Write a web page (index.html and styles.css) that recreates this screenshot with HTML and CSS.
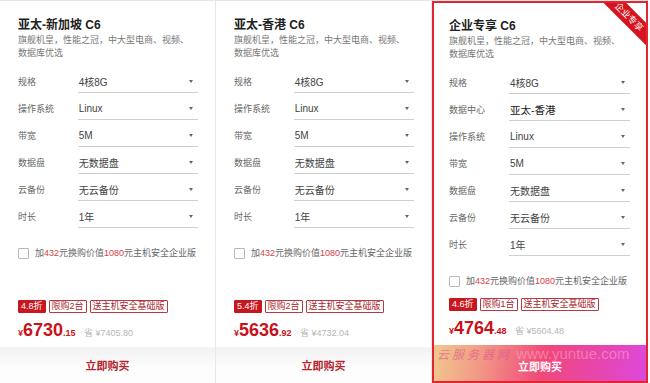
FILE: index.html
```html
<!DOCTYPE html>
<html lang="zh-CN">
<head>
<meta charset="UTF-8" />
<meta name="viewport" content="width=device-width, initial-scale=1" />
<title>云服务器套餐</title>
<link rel="stylesheet" href="styles.css">
</head>
<body>

  <div class="plans">

    <div class="card">
      <div class="card-body">
        <h3 class="title">亚太-新加坡 C6</h3>
        <p class="desc">旗舰机皇，性能之冠，中大型电商、视频、数据库优选</p>

        <div class="row"><span class="label">规格</span><div class="select">4核8G<i class="caret"></i></div></div>
        <div class="row"><span class="label">操作系统</span><div class="select">Linux<i class="caret"></i></div></div>
        <div class="row"><span class="label">带宽</span><div class="select">5M<i class="caret"></i></div></div>
        <div class="row"><span class="label">数据盘</span><div class="select">无数据盘<i class="caret"></i></div></div>
        <div class="row"><span class="label">云备份</span><div class="select">无云备份<i class="caret"></i></div></div>
        <div class="row"><span class="label">时长</span><div class="select">1年<i class="caret"></i></div></div>

        <label class="addon"><span class="box"></span>加<em>432</em>元换购价值<em>1080</em>元主机安全企业版</label>

        <div class="tags">
          <span class="tag off">4.8折</span>
          <span class="tag">限购2台</span>
          <span class="tag">送主机安全基础版</span>
        </div>
        <div class="price">
          <span class="cur">¥</span><span class="int">6730</span><span class="dec">.15</span>
          <span class="old">省 ¥7405.80</span>
        </div>
      </div>
      <a class="buy" href="#">立即购买</a>
    </div>

    <div class="card">
      <div class="card-body">
        <h3 class="title">亚太-香港 C6</h3>
        <p class="desc">旗舰机皇，性能之冠，中大型电商、视频、数据库优选</p>

        <div class="row"><span class="label">规格</span><div class="select">4核8G<i class="caret"></i></div></div>
        <div class="row"><span class="label">操作系统</span><div class="select">Linux<i class="caret"></i></div></div>
        <div class="row"><span class="label">带宽</span><div class="select">5M<i class="caret"></i></div></div>
        <div class="row"><span class="label">数据盘</span><div class="select">无数据盘<i class="caret"></i></div></div>
        <div class="row"><span class="label">云备份</span><div class="select">无云备份<i class="caret"></i></div></div>
        <div class="row"><span class="label">时长</span><div class="select">1年<i class="caret"></i></div></div>

        <label class="addon"><span class="box"></span>加<em>432</em>元换购价值<em>1080</em>元主机安全企业版</label>

        <div class="tags">
          <span class="tag off">5.4折</span>
          <span class="tag">限购2台</span>
          <span class="tag">送主机安全基础版</span>
        </div>
        <div class="price">
          <span class="cur">¥</span><span class="int">5636</span><span class="dec">.92</span>
          <span class="old">省 ¥4732.04</span>
        </div>
      </div>
      <a class="buy" href="#">立即购买</a>
    </div>

    <div class="card featured">
      <span class="ribbon">企业专享</span>
      <div class="card-body">
        <h3 class="title">企业专享 C6</h3>
        <p class="desc">旗舰机皇，性能之冠，中大型电商、视频、数据库优选</p>

        <div class="row"><span class="label">规格</span><div class="select">4核8G<i class="caret"></i></div></div>
        <div class="row"><span class="label">数据中心</span><div class="select strong">亚太-香港<i class="caret"></i></div></div>
        <div class="row"><span class="label">操作系统</span><div class="select">Linux<i class="caret"></i></div></div>
        <div class="row"><span class="label">带宽</span><div class="select">5M<i class="caret"></i></div></div>
        <div class="row"><span class="label">数据盘</span><div class="select">无数据盘<i class="caret"></i></div></div>
        <div class="row"><span class="label">云备份</span><div class="select">无云备份<i class="caret"></i></div></div>
        <div class="row"><span class="label">时长</span><div class="select">1年<i class="caret"></i></div></div>

        <label class="addon"><span class="box"></span>加<em>432</em>元换购价值<em>1080</em>元主机安全企业版</label>

        <div class="tags">
          <span class="tag off">4.6折</span>
          <span class="tag">限购1台</span>
          <span class="tag">送主机安全基础版</span>
        </div>
        <div class="price">
          <span class="cur">¥</span><span class="int">4764</span><span class="dec">.48</span>
          <span class="old">省 ¥5604.48</span>
        </div>
      </div>
      <a class="buy hot" href="#">
        <span class="mark"><b>云服务器网</b> www.yuntue.com</span>
        立即购买
      </a>
    </div>

  </div>

</body>
</html>
```

FILE: styles.css
```css
body {
  margin: 0;
  background: #fff;
  font-family: "Liberation Sans", Arial, "Noto Sans CJK SC", sans-serif;
  color: #333;
}
.plans {
  display: flex;
  width: 648px;
  height: 382px;
  border-top: 1px solid #e6e6e6;
}
.card {
  position: relative;
  width: 216px;
  box-sizing: border-box;
  border-right: 1px solid #e8e8e8;
  display: flex;
  flex-direction: column;
  overflow: hidden;
}
.card.featured {
  border: 2px solid #e3252f;
}
.card-body {
  flex: 1;
  display: flex;
  flex-direction: column;
  padding: 16px 17px 0 18px;
}
.featured .card-body {
  padding: 15px 16px 0 15px;
}
.title {
  margin: 0;
  font-size: 12px;
  line-height: 16px;
  font-weight: bold;
  color: #222;
}
.desc {
  margin: 1px 0 6px;
  width: 176px;
  font-size: 9px;
  line-height: 13px;
  color: #777;
}
.row {
  display: flex;
  align-items: flex-end;
  height: 27px;
}
.label {
  width: 60px;
  font-size: 9px;
  line-height: 22px;
  color: #666;
}
.select {
  width: 121px;
  height: 22px;
  box-sizing: border-box;
  padding: 0 5px 0 1px;
  border-bottom: 1px solid #cfcfcf;
  display: flex;
  align-items: center;
  justify-content: space-between;
  font-size: 10px;
  color: #444;
}
.select.strong {
  font-size: 10.5px;
  color: #222;
}
.caret {
  width: 0;
  height: 0;
  border-left: 2.5px solid transparent;
  border-right: 2.5px solid transparent;
  border-top: 3px solid #666;
}
.addon {
  display: flex;
  align-items: center;
  margin-top: 19px;
  font-size: 9px;
  line-height: 12px;
  color: #666;
}
.addon em {
  font-style: normal;
  color: #d9404a;
}
.box {
  width: 9px;
  height: 9px;
  margin-right: 6px;
  border: 1px solid #b8b8b8;
  border-radius: 1px;
}
.tags {
  margin-top: auto;
  display: flex;
  gap: 3px;
}
.tag {
  font-size: 9px;
  line-height: 11px;
  padding: 0 2px;
  border: 1px solid #b73a40;
  border-radius: 1px;
  color: #a8262d;
}
.tag.off {
  background: #c8161e;
  border-color: #c8161e;
  color: #fff;
}
.price {
  margin: 7px 0 4px;
  line-height: 20px;
  color: #c8121b;
  font-weight: bold;
  white-space: nowrap;
}
.cur {
  font-size: 9px;
}
.int {
  font-size: 18px;
}
.dec {
  font-size: 9px;
}
.old {
  margin-left: 4px;
  font-size: 9px;
  font-weight: normal;
  color: #b5b5b5;
}
.buy {
  position: relative;
  height: 36px;
  display: flex;
  align-items: center;
  justify-content: center;
  background: linear-gradient(#f2f2f2, #fdfdfd 60%);
  font-size: 11px;
  font-weight: bold;
  color: #b3242c;
  text-decoration: none;
}
.buy.hot {
  background: linear-gradient(100deg, #f1c88e 0%, #f29a86 22%, #f0477a 52%, #e646b4 80%, #dc48dc 100%);
  color: #fff;
  padding-top: 6px;
  box-sizing: border-box;
}
.mark {
  position: absolute;
  left: 3px;
  top: 1px;
  font-size: 15px;
  line-height: 16px;
  font-weight: normal;
  color: rgba(255, 170, 200, 0.55);
  white-space: nowrap;
}
.mark b {
  font-weight: normal;
  font-style: italic;
  font-size: 12px;
  letter-spacing: 3px;
  color: rgba(220, 90, 140, 0.7);
}
.ribbon {
  position: absolute;
  top: 6px;
  right: -23px;
  width: 80px;
  height: 16px;
  transform: rotate(45deg);
  background: #d6141f;
  color: #fff;
  font-size: 9px;
  line-height: 16px;
  text-align: center;
  z-index: 1;
}
```
